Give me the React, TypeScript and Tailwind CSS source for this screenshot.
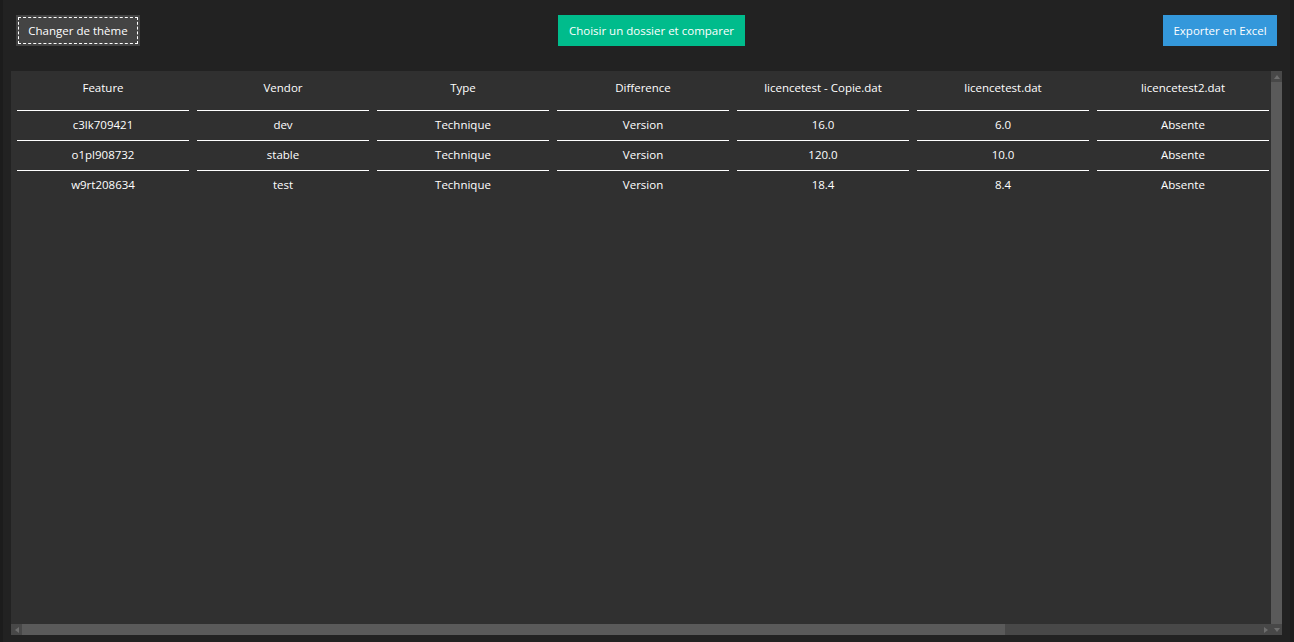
import React from "react";

const cols = ["Feature", "Vendor", "Type", "Difference", "licencetest - Copie.dat", "licencetest.dat", "licencetest2.dat"];
const rows = [
  ["c3lk709421", "dev", "Technique", "Version", "16.0", "6.0", "Absente"],
  ["o1pl908732", "stable", "Technique", "Version", "120.0", "10.0", "Absente"],
  ["w9rt208634", "test", "Technique", "Version", "18.4", "8.4", "Absente"],
];

const font = { fontFamily: '"Open Sans", "Noto Sans", sans-serif' };

export default function App() {
  return (
    <div className="flex h-[642px] w-[1294px] bg-[#222222] text-white text-[11.5px]" style={font}>
      <div className="w-[3px] bg-[#1c1c1c]" />
      <div className="flex flex-1 flex-col">
        <div className="flex h-[71px] items-start justify-between px-[13px] pt-[15px]">
          <button className="relative flex h-[31px] w-[124px] items-center justify-center bg-[#444444] leading-[16px] text-white">
            <span className="absolute inset-[2px] border border-dashed border-white" />
            Changer de thème
          </button>
          <button className="flex h-[31px] w-[187px] items-center justify-center bg-[#00bc8c] leading-[16px] text-white">
            Choisir un dossier et comparer
          </button>
          <button className="flex h-[31px] w-[114px] items-center justify-center bg-[#3498db] leading-[16px] text-white">
            Exporter en Excel
          </button>
        </div>
        <div className="mx-[8px] flex h-[564px] bg-[#303030]">
          <div className="flex flex-1 flex-col overflow-hidden">
            <div className="flex-1 overflow-hidden">
              <div className="flex gap-[8px] pl-[6px]">
                {cols.map((c) => (
                  <div key={c} className="h-[39px] w-[172px] shrink-0 pt-[9px] text-center leading-[16px]">
                    {c}
                  </div>
                ))}
              </div>
              {rows.map((r, i) => (
                <div key={i} className="flex gap-[8px] pl-[6px]">
                  {r.map((v, j) => (
                    <div
                      key={j}
                      className="flex h-[30px] w-[172px] shrink-0 items-center justify-center border-t border-white pb-[1px] leading-[16px]"
                    >
                      {v}
                    </div>
                  ))}
                </div>
              ))}
            </div>
            <div className="flex h-[11px] bg-[#484848]">
              <div className="flex w-[11px] items-center justify-center">
                <svg width="4" height="6" viewBox="0 0 4 6"><path d="M4 0 L0 3 L4 6 Z" fill="#6e6e6e" /></svg>
              </div>
              <div className="w-[983px] bg-[#5a5a5a]" />
              <div className="flex-1" />
              <div className="flex w-[11px] items-center justify-center">
                <svg width="4" height="6" viewBox="0 0 4 6"><path d="M0 0 L4 3 L0 6 Z" fill="#6e6e6e" /></svg>
              </div>
            </div>
          </div>
          <div className="flex w-[11px] flex-col bg-[#484848]">
            <div className="flex h-[11px] items-center justify-center">
              <svg width="6" height="4" viewBox="0 0 6 4"><path d="M0 4 L3 0 L6 4 Z" fill="#6e6e6e" /></svg>
            </div>
            <div className="flex-1 bg-[#5a5a5a]" />
            <div className="flex h-[11px] items-center justify-center">
              <svg width="6" height="4" viewBox="0 0 6 4"><path d="M0 0 L3 4 L6 0 Z" fill="#6e6e6e" /></svg>
            </div>
          </div>
        </div>
      </div>
      <div className="w-[4px] bg-[#1c1c1c]" />
    </div>
  );
}
